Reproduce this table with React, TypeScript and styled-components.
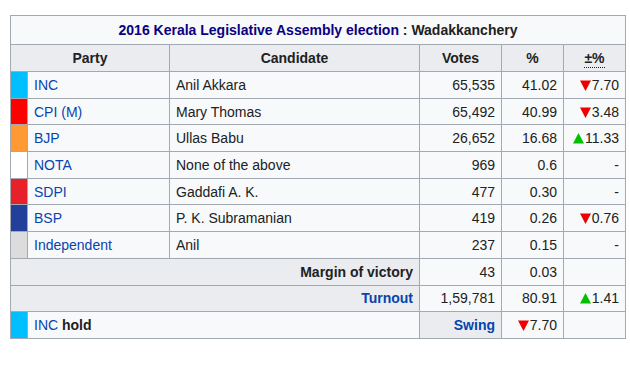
import React from "react";
import styled, { createGlobalStyle } from "styled-components";

const GlobalStyle = createGlobalStyle`
  html, body {
    margin: 0;
    padding: 0;
    background: #ffffff;
  }
`;

const StyledPage = styled.div`
  padding: 15px 0 0 10px;
  font-family: "Liberation Sans", Arial, sans-serif;
`;

const StyledTable = styled.table`
  border-collapse: collapse;
  table-layout: fixed;
  width: 615px;
  font-size: 14px;
  color: #202122;
  background-color: #f8f9fa;
  border: 1px solid #a2a9b1;
`;

const StyledRow = styled.tr<{ $height: number }>`
  height: ${({ $height }) => $height}px;
`;

const StyledCaption = styled.th`
  border: 1px solid #a2a9b1;
  background-color: #f8f9fa;
  font-weight: bold;
  text-align: center;
  padding: 0 6px;
`;

const StyledCaptionLink = styled.span`
  color: #0b0080;
`;

const StyledHead = styled.th`
  border: 1px solid #a2a9b1;
  background-color: #eaecf0;
  font-weight: bold;
  text-align: center;
  padding: 0 6px;
`;

const StyledAbbr = styled.span`
  border-bottom: 1px dotted #202122;
  padding-bottom: 1px;
`;

const StyledCell = styled.td<{
  $align?: "left" | "right" | "center";
  $shade?: boolean;
  $bold?: boolean;
}>`
  border: 1px solid #a2a9b1;
  padding: 0 6px;
  white-space: nowrap;
  text-align: ${({ $align }) => $align ?? "left"};
  font-weight: ${({ $bold }) => ($bold ? "bold" : "normal")};
  background-color: ${({ $shade }) => ($shade ? "#eaecf0" : "#f8f9fa")};
`;

const StyledSwatch = styled.td<{ $color: string }>`
  border: 1px solid #a2a9b1;
  padding: 0;
  background-color: ${({ $color }) => $color};
`;

const StyledLink = styled.span`
  color: #0645ad;
`;

const StyledBoldLink = styled.span`
  color: #0645ad;
  font-weight: bold;
`;

const StyledArrow = styled.svg`
  display: inline-block;
  vertical-align: -1px;
  margin-right: 1px;
`;

function Change({ dir, value }: { dir: "up" | "down"; value: string }) {
  return (
    <>
      <StyledArrow width="11" height="11" viewBox="0 0 11 11">
        {dir === "down" ? (
          <polygon points="0,0.5 11,0.5 5.5,11" fill="#ee0000" />
        ) : (
          <polygon points="0,10.5 11,10.5 5.5,0" fill="#00c000" />
        )}
      </StyledArrow>
      {value}
    </>
  );
}

type Result = {
  party: string;
  color: string;
  candidate: string;
  votes: string;
  pct: string;
  change?: { dir: "up" | "down"; value: string };
};

const results: Result[] = [
  { party: "INC", color: "#00bfff", candidate: "Anil Akkara", votes: "65,535", pct: "41.02", change: { dir: "down", value: "7.70" } },
  { party: "CPI (M)", color: "#ff0000", candidate: "Mary Thomas", votes: "65,492", pct: "40.99", change: { dir: "down", value: "3.48" } },
  { party: "BJP", color: "#ff9933", candidate: "Ullas Babu", votes: "26,652", pct: "16.68", change: { dir: "up", value: "11.33" } },
  { party: "NOTA", color: "#ffffff", candidate: "None of the above", votes: "969", pct: "0.6" },
  { party: "SDPI", color: "#e8202a", candidate: "Gaddafi A. K.", votes: "477", pct: "0.30" },
  { party: "BSP", color: "#22409a", candidate: "P. K. Subramanian", votes: "419", pct: "0.26", change: { dir: "down", value: "0.76" } },
  { party: "Independent", color: "#dcdcdc", candidate: "Anil", votes: "237", pct: "0.15" },
];

const ROW = 26.7;

export default function App() {
  return (
    <StyledPage>
      <GlobalStyle />
      <StyledTable>
        <colgroup>
          <col style={{ width: 17 }} />
          <col style={{ width: 142 }} />
          <col style={{ width: 250 }} />
          <col style={{ width: 82 }} />
          <col style={{ width: 62 }} />
          <col style={{ width: 62 }} />
        </colgroup>
        <tbody>
          <StyledRow $height={29}>
            <StyledCaption colSpan={6}>
              <StyledCaptionLink>2016 Kerala Legislative Assembly election</StyledCaptionLink> : Wadakkanchery
            </StyledCaption>
          </StyledRow>
          <StyledRow $height={27}>
            <StyledHead colSpan={2}>Party</StyledHead>
            <StyledHead>Candidate</StyledHead>
            <StyledHead>Votes</StyledHead>
            <StyledHead>%</StyledHead>
            <StyledHead>
              <StyledAbbr>±%</StyledAbbr>
            </StyledHead>
          </StyledRow>
          {results.map((r) => (
            <StyledRow $height={ROW} key={r.party}>
              <StyledSwatch $color={r.color} />
              <StyledCell>
                <StyledLink>{r.party}</StyledLink>
              </StyledCell>
              <StyledCell>{r.candidate}</StyledCell>
              <StyledCell $align="right">{r.votes}</StyledCell>
              <StyledCell $align="right">{r.pct}</StyledCell>
              <StyledCell $align="right">
                {r.change ? <Change dir={r.change.dir} value={r.change.value} /> : "-"}
              </StyledCell>
            </StyledRow>
          ))}
          <StyledRow $height={ROW}>
            <StyledCell colSpan={3} $align="right" $shade $bold>
              Margin of victory
            </StyledCell>
            <StyledCell $align="right">43</StyledCell>
            <StyledCell $align="right">0.03</StyledCell>
            <StyledCell />
          </StyledRow>
          <StyledRow $height={ROW}>
            <StyledCell colSpan={3} $align="right" $shade>
              <StyledBoldLink>Turnout</StyledBoldLink>
            </StyledCell>
            <StyledCell $align="right">1,59,781</StyledCell>
            <StyledCell $align="right">80.91</StyledCell>
            <StyledCell $align="right">
              <Change dir="up" value="1.41" />
            </StyledCell>
          </StyledRow>
          <StyledRow $height={ROW}>
            <StyledSwatch $color="#00bfff" />
            <StyledCell colSpan={2}>
              <StyledLink>INC</StyledLink> <b>hold</b>
            </StyledCell>
            <StyledCell $align="right" $shade>
              <StyledBoldLink>Swing</StyledBoldLink>
            </StyledCell>
            <StyledCell $align="right">
              <Change dir="down" value="7.70" />
            </StyledCell>
            <StyledCell />
          </StyledRow>
        </tbody>
      </StyledTable>
    </StyledPage>
  );
}
